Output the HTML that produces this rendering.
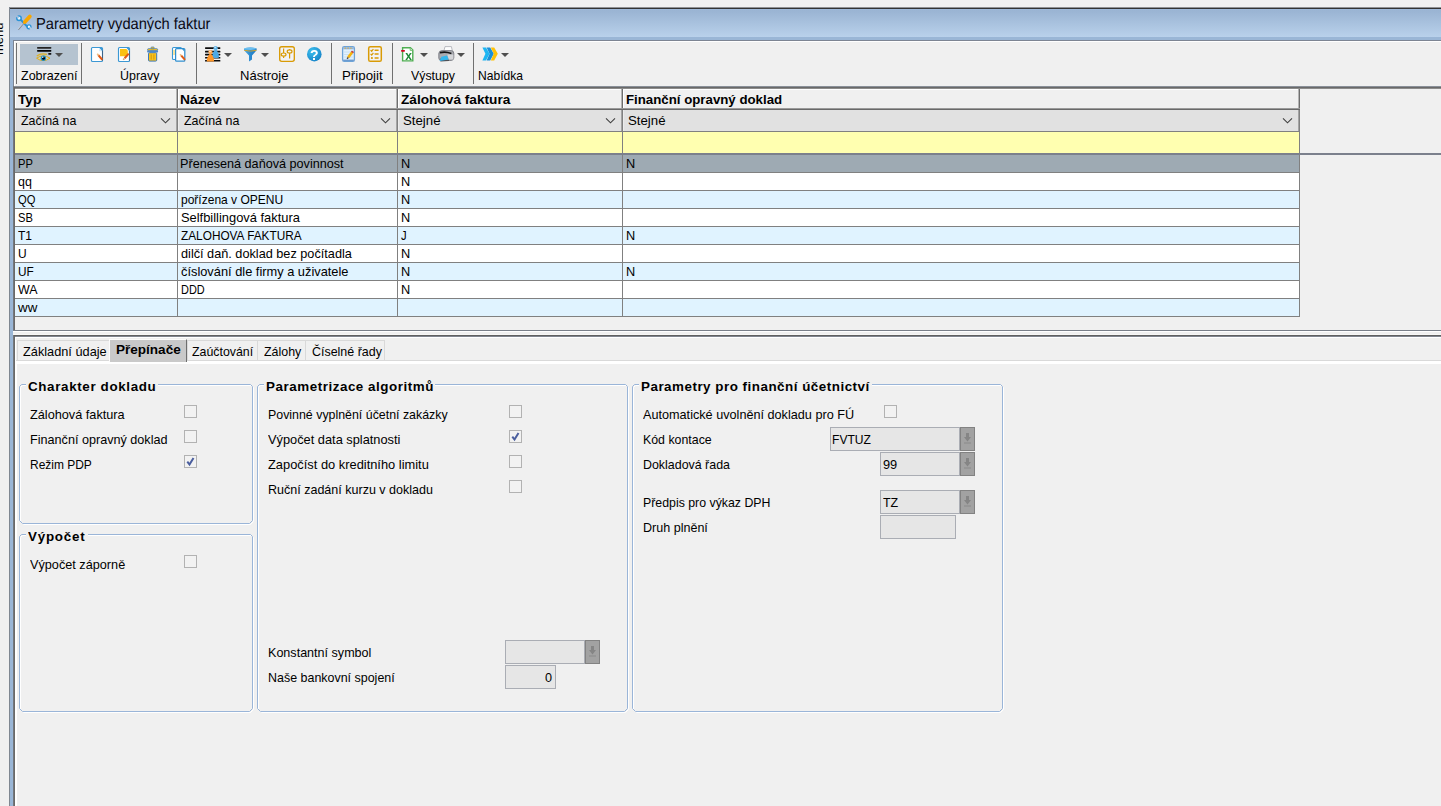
<!DOCTYPE html>
<html lang="cs"><head><meta charset="utf-8"><title>Parametry vydaných faktur</title>
<style>
html,body{margin:0;padding:0}
body{width:1441px;height:806px;overflow:hidden;background:#f0f0f0;position:relative;font-family:"Liberation Sans",sans-serif}
body>div,body>svg,body>span{position:absolute;display:block}
.t{white-space:pre;line-height:20px;transform-origin:0 0}
.menu{left:-8.5px;top:14.5px;width:14px;height:44px;overflow:hidden}
.menu span{position:absolute;left:0;top:40px;white-space:pre;font-size:13px;line-height:13px;transform-origin:0 0;transform:rotate(-90deg)}
</style></head><body>
<div class="menu"><span>menu</span></div>
<!-- window frame + title bar -->
<div style="left:9px;top:7px;width:1432px;height:1px;background:#8f9195;"></div>
<div style="left:9px;top:8px;width:1432px;height:1px;background:#333333;"></div>
<div style="left:9px;top:7px;width:1px;height:799px;background:#7f8791;"></div>
<div style="left:10px;top:9px;width:1431px;height:28px;background:linear-gradient(#9ab4d3 0%, #9bb5d4 10%, #b9d1eb 100%);"></div>
<div style="left:10px;top:9px;width:1431px;height:1px;background:#9db8d8;"></div>
<div style="left:10px;top:37px;width:1431px;height:3px;background:#9ab6d6;"></div>
<div style="left:10px;top:37px;width:3px;height:769px;background:#9ab6d6;"></div>
<div style="left:13px;top:40px;width:1428px;height:1px;background:#7d8593;"></div>
<div style="left:13px;top:40px;width:1px;height:766px;background:#7d8593;"></div>
<div style="left:14px;top:41px;width:1427px;height:1px;background:#ffffff;"></div>
<div style="left:14px;top:41px;width:1px;height:45px;background:#ffffff;"></div>
<!-- toolbar -->
<div style="left:16px;top:43px;width:1px;height:41px;background:#707070;"></div>
<div style="left:81px;top:43px;width:1px;height:41px;background:#707070;"></div>
<div style="left:196px;top:43px;width:1px;height:41px;background:#707070;"></div>
<div style="left:331px;top:43px;width:1px;height:41px;background:#707070;"></div>
<div style="left:392px;top:43px;width:1px;height:41px;background:#707070;"></div>
<div style="left:473px;top:43px;width:1px;height:41px;background:#707070;"></div>
<div style="left:20px;top:44px;width:58px;height:21px;background:#b5c3d0;"></div>
<svg style="left:0;top:0" width="540" height="90" viewBox="0 0 540 90">
<defs>
<radialGradient id="gh" cx="35%" cy="30%" r="80%"><stop offset="0" stop-color="#3cc0ee"/><stop offset="1" stop-color="#1580c6"/></radialGradient>
<linearGradient id="gf" x1="0" x2="1"><stop offset="0" stop-color="#4fb0ea"/><stop offset=".5" stop-color="#2a8ad0"/><stop offset="1" stop-color="#1f78c0"/></linearGradient>
</defs>
<!-- title icon: wrench + screwdriver -->
<g>
<path d="M20.6 19.6 L28 27.4" stroke="#2b93d6" stroke-width="2.1" fill="none"/>
<circle cx="19" cy="18.2" r="2.2" fill="#e6f5fc" stroke="#2b93d6" stroke-width="1.5"/>
<path d="M16.2 15.6 L18.6 17.8" stroke="#a3bddb" stroke-width="1.9"/>
<circle cx="29" cy="26.8" r="1.9" fill="#eef8fd" stroke="#2b93d6" stroke-width="1.4"/>
<path d="M29.4 27.2 L31.6 29.4" stroke="#b1cbe6" stroke-width="1.7"/>
<path d="M23.8 23.2 L18.4 29.6" stroke="#848a94" stroke-width="1.3" fill="none"/>
<path d="M23 23.4 L18 29" stroke="#e6edf5" stroke-width=".7" fill="none" opacity=".8"/>
<path d="M29.8 16.4 L24.8 22" stroke="#f7a600" stroke-width="3.8" stroke-linecap="round" fill="none"/>
</g>
<!-- eye / view icon -->
<g>
<rect x="37" y="47.1" width="14.4" height="1.6" rx=".7" fill="#242424"/>
<rect x="37" y="50.1" width="14.4" height="1.6" rx=".7" fill="#050505"/>
<rect x="48.2" y="53.1" width="3.2" height="1.6" rx=".6" fill="#151515"/>
<path d="M36.8 56 Q41 52.6 47 54.4" fill="none" stroke="#e3b31e" stroke-width="1.2"/>
<path d="M36.6 58.2 Q43.2 53.6 50 58.2 Q43.2 63 36.6 58.2 Z" fill="#e9d9a0" fill-opacity=".55" stroke="#dfae1a" stroke-width="1"/>
<circle cx="43.4" cy="58.3" r="2.7" fill="#1f8fc6"/>
<circle cx="43.5" cy="58.2" r="1.5" fill="#06080c"/>
<circle cx="42.8" cy="57.2" r=".7" fill="#ffffff"/>
</g>
<!-- dropdown arrows -->
<g fill="#4f4f4f">
<path d="M55 53 h8 l-4 4 z"/><path d="M224 53 h8 l-4 4 z"/><path d="M261 53 h8 l-4 4 z"/>
<path d="M420 53 h8 l-4 4 z"/><path d="M457 53 h8 l-4 4 z"/><path d="M501 53 h8 l-4 4 z"/>
</g>
<!-- new document -->
<g>
<rect x="91.5" y="47.5" width="11" height="14" rx="1" fill="#ffffff" stroke="#3c98d4" stroke-width="1.15"/>
<path d="M99.4 48 h2.6 v3 z" fill="#3c98d4"/>
<path d="M99.2 48.6 v2.6 h2.6" fill="#cfe9f9"/>
<path d="M102.5 50.6 V60.6" stroke="#3d5878" stroke-width="1" opacity=".8"/>
<path d="M98.3 55.1 L102.3 59.8" stroke="#e25a14" stroke-width="2.1" fill="none"/>
<path d="M97.2 53.8 L98.6 55.4" stroke="#eebf86" stroke-width="1.6" fill="none"/>
</g>
<!-- edit document -->
<g>
<rect x="118.5" y="47.5" width="11" height="14" rx="1" fill="#ffffff" stroke="#3c98d4" stroke-width="1.15"/>
<path d="M120 49 h6.4 l1.4 1.6 v5.6 h-7.8 z" fill="#fac113"/>
<path d="M126.6 48 h2.4 v2.8 z" fill="#3c98d4"/>
<path d="M129.5 51 V60.6" stroke="#3d5878" stroke-width="1" opacity=".7"/>
<path d="M128.7 53.6 L124.6 58.2" stroke="#e25a14" stroke-width="2.1" fill="none"/>
<path d="M124.4 58.4 L123.2 59.8" stroke="#c9a070" stroke-width="1.5" fill="none"/>
</g>
<!-- trash -->
<g>
<rect x="148.5" y="52.7" width="8.2" height="8.4" rx="1" fill="#fac21c" stroke="#3f79b6" stroke-width="1"/>
<path d="M151.2 54.4 V59.6 M153.9 54.4 V59.6" stroke="#d39a0c" stroke-width="1"/>
<rect x="147.6" y="48.7" width="10" height="2" rx=".8" fill="#fac21c" stroke="#3f79b6" stroke-width=".8"/>
<rect x="147.1" y="50.5" width="11" height="2" rx=".8" fill="#4d88ca"/>
<rect x="151" y="47" width="3.2" height="1.7" rx=".7" fill="#fac21c" stroke="#3f79b6" stroke-width=".7"/>
</g>
<!-- copy document -->
<g>
<rect x="172.5" y="47.5" width="9" height="12" rx="1" fill="#ffffff" stroke="#3c98d4" stroke-width="1.1"/>
<rect x="173.4" y="50" width="1.2" height="5" fill="#fbd765"/>
<rect x="175.6" y="48.6" width="9.2" height="12.6" rx="1" fill="#ffffff" stroke="#2f8fd0" stroke-width="1.25"/>
<path d="M182 49 h2.4 v2.8 z" fill="#3c98d4"/>
<path d="M181.1 55.4 L185 59.9" stroke="#e25a14" stroke-width="2" fill="none"/>
<path d="M180 54.2 L181.3 55.7" stroke="#eebf86" stroke-width="1.5" fill="none"/>
</g>
<!-- list with pawns -->
<g>
<g fill="#0c0c0c"><rect x="205" y="47.2" width="15.4" height="1.7" rx=".6"/><rect x="205" y="50.8" width="15.4" height="1.7" rx=".6"/><rect x="205" y="53.8" width="15.4" height="1.6" rx=".6"/><rect x="205" y="56.9" width="15.4" height="1.6" rx=".6"/><rect x="205" y="59.9" width="15.4" height="1.7" rx=".6"/></g>
<path d="M215.6 49 C217.8 51.4 219.3 54.6 219 57.6 Q215.6 58.6 212.4 57.6 C212 54.6 213.4 51.4 215.6 49 Z" fill="#4da9e4"/>
<circle cx="215.6" cy="48.2" r="2.1" fill="#62b6ea"/>
<circle cx="215.2" cy="47.6" r=".8" fill="#c8e8fa"/>
<path d="M210.4 53 C212.8 55.4 214.4 58.4 214 61.4 H206.8 C206.4 58.4 208 55.4 210.4 53 Z" fill="#ff9628"/>
<circle cx="210.4" cy="52" r="2.1" fill="#ffa54a"/>
<circle cx="210" cy="51.4" r=".8" fill="#ffe7cf"/>
</g>
<!-- funnel -->
<g>
<path d="M244 48.6 Q250.3 46.2 256.6 48.6 V50.2 L252 55.6 V59.6 L249 61.6 V55.6 L244 50.2 Z" fill="url(#gf)"/>
<ellipse cx="250.3" cy="48.7" rx="5.8" ry="1.2" fill="#6cc0f0"/>
<path d="M244.3 50.4 Q250.3 51.8 256.3 50.4" fill="none" stroke="#d6a227" stroke-width="1"/>
</g>
<!-- sliders box -->
<g fill="none" stroke="#d99b05">
<rect x="279.7" y="46.7" width="14.6" height="14.6" rx="2" fill="#f2f3f8" stroke-width="1.35"/>
<path d="M283.6 48.6 V53 M283.6 56 V58" stroke-width="1.2"/>
<ellipse cx="283.6" cy="54.6" rx="2.4" ry="1.6" fill="#f2f3f8" stroke-width="1.2"/>
<path d="M289.6 49 V50 M289.6 53 V58.6" stroke-width="1.2"/>
<ellipse cx="289.6" cy="51.4" rx="2.4" ry="1.6" fill="#f2f3f8" stroke-width="1.2"/>
</g>
<!-- help -->
<g>
<circle cx="314.3" cy="54.2" r="7.3" fill="url(#gh)"/>
</g>
<!-- notepad -->
<g>
<rect x="342.6" y="46.7" width="11.8" height="14.6" rx="1.6" fill="#e2f1fc" stroke="#6ea3d6" stroke-width="1.3"/>
<rect x="343.2" y="47.3" width="10.6" height="2" fill="#8fb3dc"/>
<path d="M344.6 48.2 h1.4 M347.4 48.2 h1.4 M350.2 48.2 h1.4" stroke="#d8b050" stroke-width="1.2"/>
<path d="M344 52 h9 M344 54.5 h9 M344 57 h9" stroke="#c3dcf1" stroke-width=".8"/>
<rect x="343.2" y="59.6" width="10.6" height="1.4" fill="#6c9bd0"/>
<path d="M352.2 52.2 L348.2 57.4" stroke="#f6b40c" stroke-width="2.6" fill="none"/>
<path d="M353 51.2 L352 52.6" stroke="#c8403a" stroke-width="2.6" fill="none"/>
<path d="M348.2 57.4 L347.2 58.9" stroke="#5a4632" stroke-width="1.5" fill="none"/>
</g>
<!-- checklist -->
<g fill="none" stroke="#d99b05">
<rect x="368.7" y="46.7" width="12.6" height="14.6" rx="1.6" fill="#f2f3f8" stroke-width="1.5"/>
<path d="M370.6 50 L371.7 51.2 L373.4 49" stroke-width="1.2"/>
<path d="M370.6 53.8 L371.7 55 L373.4 52.8" stroke-width="1.2"/>
<circle cx="371.9" cy="58" r="1.1" fill="#d99b05" stroke="none"/>
<path d="M374.6 50.2 h4 M374.6 54 h4 M374.6 58 h4" stroke-width="1.5"/>
</g>
<!-- excel -->
<g>
<path d="M402.6 47.7 H410.4 L412.8 50.1 V60.9 H402.6 Z" fill="#ffffff" stroke="#4fae52" stroke-width="1.4"/>
<path d="M410.2 47.8 V50.4 H412.8" fill="#d6efd6" stroke="#55b055" stroke-width=".8"/>
<rect x="401" y="50" width="4" height="1.8" rx=".8" fill="#d0061e"/>
</g>
<!-- printer -->
<g>
<path d="M445 46.6 H451.4 L452.6 52 H443.6 Z" fill="#fdfdfd" stroke="#a9abb2" stroke-width=".8"/>
<path d="M438.8 53.4 Q439 50.8 442 50.6 H451.4 Q453.8 50.8 453.8 53.4 V58 Q453.6 60.2 451.4 60.4 H441 Q438.8 60.2 438.8 58 Z" fill="#a9abb0" stroke="#6d6f76" stroke-width=".8"/>
<path d="M447.4 54.4 H453.4 V59.4 H448.6 Z" fill="#d4d5d8"/>
<path d="M440 51.8 Q445.8 50.4 451.6 52.8 L451.2 54.2 Q445.8 52.4 439.8 53.6 Z" fill="#141416"/>
<path d="M440.2 58.6 L449 59.8 L449 61 L440.4 61.6 Z" fill="#4f5157"/>
<path d="M441.4 56.8 L447 55.4 L448.8 59.6 L439.6 61 Z" fill="#32b6ee"/>
</g>
<!-- chevrons -->
<g>
<path d="M482.4 47.4 H486 L489.6 53.8 L486 60.6 H482.4 L485.4 53.8 Z" fill="#1fb6f2"/>
<path d="M486.6 47.4 H490.2 L493.8 53.8 L490.2 60.6 H486.6 L489.6 53.8 Z" fill="#1a90d8"/>
<path d="M490.8 47.4 H494.2 L497.8 53.8 L494.2 60.6 H490.8 L493.8 53.8 Z" fill="#ffc107"/>
</g>
</svg>

<!-- data grid -->
<div style="left:13px;top:86px;width:1428px;height:1px;background:#8a9099;"></div>
<div style="left:13px;top:87px;width:1428px;height:1px;background:#696969;"></div>
<div style="left:14px;top:88px;width:1427px;height:1px;background:#8c8c8c;"></div>
<div style="left:13px;top:86px;width:1px;height:245px;background:#74777c;"></div>
<div style="left:14px;top:88px;width:1px;height:242px;background:#696969;"></div>
<div style="left:15px;top:89px;width:1285px;height:19px;background:#f0f0f0;"></div>
<div style="left:15px;top:89px;width:1284px;height:1px;background:#ffffff;"></div>
<div style="left:15px;top:89px;width:1px;height:19px;background:#ffffff;"></div>
<div style="left:176px;top:89px;width:1px;height:19px;background:#b4b4b4;"></div>
<div style="left:177px;top:89px;width:1px;height:66px;background:#6e6e6e;"></div>
<div style="left:178px;top:89px;width:1px;height:19px;background:#ffffff;"></div>
<div style="left:396px;top:89px;width:1px;height:19px;background:#b4b4b4;"></div>
<div style="left:397px;top:89px;width:1px;height:66px;background:#6e6e6e;"></div>
<div style="left:398px;top:89px;width:1px;height:19px;background:#ffffff;"></div>
<div style="left:621px;top:89px;width:1px;height:19px;background:#b4b4b4;"></div>
<div style="left:622px;top:89px;width:1px;height:66px;background:#6e6e6e;"></div>
<div style="left:623px;top:89px;width:1px;height:19px;background:#ffffff;"></div>
<div style="left:1298px;top:89px;width:1px;height:19px;background:#b4b4b4;"></div>
<div style="left:1299px;top:89px;width:1px;height:66px;background:#6e6e6e;"></div>
<div style="left:15px;top:108px;width:1285px;height:1px;background:#9a9a9a;"></div>
<div style="left:15px;top:109px;width:1285px;height:1px;background:#696969;"></div>
<div style="left:15px;top:110px;width:1284px;height:21px;background:#e1e1e1;"></div>
<div style="left:177px;top:110px;width:1px;height:21px;background:#808080;"></div>
<div style="left:176px;top:110px;width:1px;height:21px;background:#a4a4a4;"></div>
<div style="left:15px;top:110px;width:1px;height:21px;background:#ececec;"></div>
<div style="left:397px;top:110px;width:1px;height:21px;background:#808080;"></div>
<div style="left:396px;top:110px;width:1px;height:21px;background:#a4a4a4;"></div>
<div style="left:178px;top:110px;width:1px;height:21px;background:#ececec;"></div>
<div style="left:622px;top:110px;width:1px;height:21px;background:#808080;"></div>
<div style="left:621px;top:110px;width:1px;height:21px;background:#a4a4a4;"></div>
<div style="left:398px;top:110px;width:1px;height:21px;background:#ececec;"></div>
<div style="left:1299px;top:110px;width:1px;height:21px;background:#808080;"></div>
<div style="left:1298px;top:110px;width:1px;height:21px;background:#a4a4a4;"></div>
<div style="left:623px;top:110px;width:1px;height:21px;background:#ececec;"></div>
<div style="left:15px;top:131px;width:1285px;height:1px;background:#808080;"></div>
<div style="left:15px;top:132px;width:1284px;height:21px;background:#ffffb0;"></div>
<div style="left:177px;top:132px;width:1px;height:21px;background:#808080;"></div>
<div style="left:397px;top:132px;width:1px;height:21px;background:#808080;"></div>
<div style="left:622px;top:132px;width:1px;height:21px;background:#808080;"></div>
<div style="left:1299px;top:132px;width:1px;height:21px;background:#808080;"></div>
<div style="left:15px;top:153px;width:1426px;height:2px;background:#7b808c;"></div>
<div style="left:15px;top:155px;width:1284px;height:17px;background:#9eaab3;"></div>
<div style="left:15px;top:172px;width:1285px;height:1px;background:#808080;"></div>
<div style="left:15px;top:173px;width:1284px;height:17px;background:#ffffff;"></div>
<div style="left:15px;top:190px;width:1285px;height:1px;background:#808080;"></div>
<div style="left:15px;top:191px;width:1284px;height:17px;background:#e0f3ff;"></div>
<div style="left:15px;top:208px;width:1285px;height:1px;background:#808080;"></div>
<div style="left:15px;top:209px;width:1284px;height:17px;background:#ffffff;"></div>
<div style="left:15px;top:226px;width:1285px;height:1px;background:#808080;"></div>
<div style="left:15px;top:227px;width:1284px;height:17px;background:#e0f3ff;"></div>
<div style="left:15px;top:244px;width:1285px;height:1px;background:#808080;"></div>
<div style="left:15px;top:245px;width:1284px;height:17px;background:#ffffff;"></div>
<div style="left:15px;top:262px;width:1285px;height:1px;background:#808080;"></div>
<div style="left:15px;top:263px;width:1284px;height:17px;background:#e0f3ff;"></div>
<div style="left:15px;top:280px;width:1285px;height:1px;background:#808080;"></div>
<div style="left:15px;top:281px;width:1284px;height:17px;background:#ffffff;"></div>
<div style="left:15px;top:298px;width:1285px;height:1px;background:#808080;"></div>
<div style="left:15px;top:299px;width:1284px;height:17px;background:#e0f3ff;"></div>
<div style="left:15px;top:316px;width:1285px;height:1px;background:#808080;"></div>
<div style="left:177px;top:155px;width:1px;height:162px;background:#808080;"></div>
<div style="left:397px;top:155px;width:1px;height:162px;background:#808080;"></div>
<div style="left:622px;top:155px;width:1px;height:162px;background:#808080;"></div>
<div style="left:1299px;top:155px;width:1px;height:162px;background:#808080;"></div>
<div style="left:13px;top:330px;width:1428px;height:1px;background:#7a808a;"></div>
<div style="left:13px;top:331px;width:1428px;height:1px;background:#ffffff;"></div>
<div style="left:13px;top:332px;width:1428px;height:2px;background:#f0f0f0;"></div>
<div style="left:13px;top:334px;width:1428px;height:1px;background:#f7f7f7;"></div>
<div style="left:13px;top:335px;width:1428px;height:1px;background:#606060;"></div>
<div style="left:13px;top:336px;width:1428px;height:1px;background:#80858f;"></div>
<div style="left:13px;top:335px;width:1px;height:471px;background:#74777c;"></div>
<div style="left:14px;top:336px;width:1px;height:470px;background:#696969;"></div>
<div style="left:15px;top:337px;width:1426px;height:1px;background:#ffffff;"></div>
<div style="left:15px;top:337px;width:1px;height:469px;background:#ffffff;"></div>
<div style="left:16px;top:361px;width:1px;height:445px;background:#ffffff;"></div>
<svg style="left:160px;top:117px" width="12" height="8" viewBox="0 0 12 8"><path d="M1 1.3 L5.5 5.8 L10 1.3" fill="none" stroke="#404040" stroke-width="1.1"/></svg>
<svg style="left:380px;top:117px" width="12" height="8" viewBox="0 0 12 8"><path d="M1 1.3 L5.5 5.8 L10 1.3" fill="none" stroke="#404040" stroke-width="1.1"/></svg>
<svg style="left:605px;top:117px" width="12" height="8" viewBox="0 0 12 8"><path d="M1 1.3 L5.5 5.8 L10 1.3" fill="none" stroke="#404040" stroke-width="1.1"/></svg>
<svg style="left:1282px;top:117px" width="12" height="8" viewBox="0 0 12 8"><path d="M1 1.3 L5.5 5.8 L10 1.3" fill="none" stroke="#404040" stroke-width="1.1"/></svg>
<!-- tab strip -->
<div style="left:16px;top:360px;width:1425px;height:1px;background:#d9d9d9;"></div>
<div style="left:16px;top:361px;width:1425px;height:3px;background:#ffffff;"></div>
<div style="left:17px;top:340px;width:93px;height:21px;box-sizing:border-box;border:1px solid #d9d9d9;background:#f0f0f0"></div>
<div style="left:187px;top:340px;width:71px;height:21px;box-sizing:border-box;border:1px solid #d9d9d9;background:#f0f0f0"></div>
<div style="left:257px;top:340px;width:49px;height:21px;box-sizing:border-box;border:1px solid #d9d9d9;background:#f0f0f0"></div>
<div style="left:305px;top:340px;width:80px;height:21px;box-sizing:border-box;border:1px solid #d9d9d9;background:#f0f0f0"></div>
<div style="left:109px;top:339px;width:78px;height:23px;box-sizing:border-box;background:#c9c9c9;border-top:1px solid #fbfbfb;border-left:1px solid #fbfbfb;border-right:1px solid #6e6e6e"></div>
<!-- group boxes / form -->
<svg style="left:19px;top:384px" width="236" height="142" viewBox="0 0 236 142"><path d="M3.5 1.5 H232.5 L234.5 3.5 V137.5 L231.5 140.5 H4.5 L1.5 137.5 V3.5 Z" fill="none" stroke="#ffffff" stroke-width="1"/><path d="M2.5 0.5 H231.5 L233.5 2.5 V136.5 L230.5 139.5 H3.5 L0.5 136.5 V2.5 Z" fill="none" stroke="#9ab5d8" stroke-width="1"/></svg>
<div style="left:26px;top:384px;width:132px;height:2px;background:#f0f0f0;"></div>
<svg style="left:19px;top:534px" width="236" height="180" viewBox="0 0 236 180"><path d="M3.5 1.5 H232.5 L234.5 3.5 V175.5 L231.5 178.5 H4.5 L1.5 175.5 V3.5 Z" fill="none" stroke="#ffffff" stroke-width="1"/><path d="M2.5 0.5 H231.5 L233.5 2.5 V174.5 L230.5 177.5 H3.5 L0.5 174.5 V2.5 Z" fill="none" stroke="#9ab5d8" stroke-width="1"/></svg>
<div style="left:26px;top:534px;width:62px;height:2px;background:#f0f0f0;"></div>
<svg style="left:257px;top:384px" width="373" height="330" viewBox="0 0 373 330"><path d="M3.5 1.5 H369.5 L371.5 3.5 V325.5 L368.5 328.5 H4.5 L1.5 325.5 V3.5 Z" fill="none" stroke="#ffffff" stroke-width="1"/><path d="M2.5 0.5 H368.5 L370.5 2.5 V324.5 L367.5 327.5 H3.5 L0.5 324.5 V2.5 Z" fill="none" stroke="#9ab5d8" stroke-width="1"/></svg>
<div style="left:264px;top:384px;width:171px;height:2px;background:#f0f0f0;"></div>
<svg style="left:632px;top:384px" width="373" height="330" viewBox="0 0 373 330"><path d="M3.5 1.5 H369.5 L371.5 3.5 V325.5 L368.5 328.5 H4.5 L1.5 325.5 V3.5 Z" fill="none" stroke="#ffffff" stroke-width="1"/><path d="M2.5 0.5 H368.5 L370.5 2.5 V324.5 L367.5 327.5 H3.5 L0.5 324.5 V2.5 Z" fill="none" stroke="#9ab5d8" stroke-width="1"/></svg>
<div style="left:639px;top:384px;width:233px;height:2px;background:#f0f0f0;"></div>
<div style="left:184px;top:405px;width:13px;height:13px;box-sizing:border-box;border:1px solid #b2b2b2;background:#f2f2f2"></div>
<div style="left:184px;top:430px;width:13px;height:13px;box-sizing:border-box;border:1px solid #b2b2b2;background:#f2f2f2"></div>
<div style="left:184px;top:455px;width:13px;height:13px;box-sizing:border-box;border:1px solid #b2b2b2;background:#f2f2f2"></div>
<svg style="left:184px;top:455px" width="13" height="13" viewBox="0 0 13 13"><path d="M3.3 6.7 L5.5 9.5 L9.5 3" fill="none" stroke="#4a5e9e" stroke-width="2"/></svg>
<div style="left:184px;top:555px;width:13px;height:13px;box-sizing:border-box;border:1px solid #b2b2b2;background:#f2f2f2"></div>
<div style="left:509px;top:405px;width:13px;height:13px;box-sizing:border-box;border:1px solid #b2b2b2;background:#f2f2f2"></div>
<div style="left:509px;top:430px;width:13px;height:13px;box-sizing:border-box;border:1px solid #b2b2b2;background:#f2f2f2"></div>
<svg style="left:509px;top:430px" width="13" height="13" viewBox="0 0 13 13"><path d="M3.3 6.7 L5.5 9.5 L9.5 3" fill="none" stroke="#4a5e9e" stroke-width="2"/></svg>
<div style="left:509px;top:455px;width:13px;height:13px;box-sizing:border-box;border:1px solid #b2b2b2;background:#f2f2f2"></div>
<div style="left:509px;top:480px;width:13px;height:13px;box-sizing:border-box;border:1px solid #b2b2b2;background:#f2f2f2"></div>
<div style="left:884px;top:405px;width:13px;height:13px;box-sizing:border-box;border:1px solid #b2b2b2;background:#f2f2f2"></div>
<div style="left:830px;top:427px;width:130px;height:24px;box-sizing:border-box;border:1px solid #aaadb4;background:#e6e6e6"></div>
<div style="left:960px;top:427px;width:15px;height:24px;box-sizing:border-box;border:1px solid #828282;background:#a2a2a2"></div>
<svg style="left:960px;top:427px" width="15" height="24" viewBox="0 0 15 24"><path d="M6 6 H9 V10 H11 L7.5 14.5 L4 10 H6 Z" fill="#858585"/><rect x="4" y="15.5" width="7" height="1" fill="#8a8a8a"/></svg>
<div style="left:880px;top:452px;width:80px;height:24px;box-sizing:border-box;border:1px solid #aaadb4;background:#e6e6e6"></div>
<div style="left:960px;top:452px;width:15px;height:24px;box-sizing:border-box;border:1px solid #828282;background:#a2a2a2"></div>
<svg style="left:960px;top:452px" width="15" height="24" viewBox="0 0 15 24"><path d="M6 6 H9 V10 H11 L7.5 14.5 L4 10 H6 Z" fill="#858585"/><rect x="4" y="15.5" width="7" height="1" fill="#8a8a8a"/></svg>
<div style="left:880px;top:490px;width:80px;height:24px;box-sizing:border-box;border:1px solid #aaadb4;background:#e6e6e6"></div>
<div style="left:960px;top:490px;width:15px;height:24px;box-sizing:border-box;border:1px solid #828282;background:#a2a2a2"></div>
<svg style="left:960px;top:490px" width="15" height="24" viewBox="0 0 15 24"><path d="M6 6 H9 V10 H11 L7.5 14.5 L4 10 H6 Z" fill="#858585"/><rect x="4" y="15.5" width="7" height="1" fill="#8a8a8a"/></svg>
<div style="left:880px;top:515px;width:76px;height:24px;box-sizing:border-box;border:1px solid #aaadb4;background:#e6e6e6"></div>
<div style="left:505px;top:640px;width:80px;height:24px;box-sizing:border-box;border:1px solid #aaadb4;background:#e6e6e6"></div>
<div style="left:585px;top:640px;width:15px;height:24px;box-sizing:border-box;border:1px solid #828282;background:#a2a2a2"></div>
<svg style="left:585px;top:640px" width="15" height="24" viewBox="0 0 15 24"><path d="M6 6 H9 V10 H11 L7.5 14.5 L4 10 H6 Z" fill="#858585"/><rect x="4" y="15.5" width="7" height="1" fill="#8a8a8a"/></svg>
<div style="left:505px;top:665px;width:51px;height:24px;box-sizing:border-box;border:1px solid #aaadb4;background:#e6e6e6"></div>
<!-- text -->
<span class="t" style="left:20.73px;top:66px;font-size:13px;font-weight:400;color:#000;transform:scaleX(0.9638);">Zobrazení</span>
<span class="t" style="left:119.66px;top:66px;font-size:13px;font-weight:400;color:#000;transform:scaleX(0.956);">Úpravy</span>
<span class="t" style="left:239.5px;top:66px;font-size:13px;font-weight:400;color:#000;transform:scaleX(1.0021);">Nástroje</span>
<span class="t" style="left:341.5px;top:66px;font-size:13px;font-weight:400;color:#000;transform:scaleX(1.0222);">Připojit</span>
<span class="t" style="left:411.05px;top:66px;font-size:13px;font-weight:400;color:#000;transform:scaleX(0.9499);">Výstupy</span>
<span class="t" style="left:477.5px;top:66px;font-size:13px;font-weight:400;color:#000;transform:scaleX(0.9286);">Nabídka</span>
<span class="t" style="left:35.63px;top:15px;font-size:16px;font-weight:400;color:#0a0a14;transform:scaleX(0.9167);text-rendering:geometricPrecision;">Parametry vydaných faktur</span>
<span class="t" style="left:17.99px;top:90px;font-size:13px;font-weight:700;color:#000;transform:scaleX(1.0501);">Typ</span>
<span class="t" style="left:180.19px;top:90px;font-size:13px;font-weight:700;color:#000;transform:scaleX(1.0632);">Název</span>
<span class="t" style="left:400.72px;top:90px;font-size:13px;font-weight:700;color:#000;transform:scaleX(1.0512);">Zálohová faktura</span>
<span class="t" style="left:625.52px;top:90px;font-size:13px;font-weight:700;color:#000;transform:scaleX(1.0195);">Finanční opravný doklad</span>
<span class="t" style="left:20.73px;top:111px;font-size:13px;font-weight:400;color:#000;transform:scaleX(0.9572);">Začíná na</span>
<span class="t" style="left:183.73px;top:111px;font-size:13px;font-weight:400;color:#000;transform:scaleX(0.9572);">Začíná na</span>
<span class="t" style="left:403.39px;top:111px;font-size:13px;font-weight:400;color:#000;transform:scaleX(1.0173);">Stejné</span>
<span class="t" style="left:628.39px;top:111px;font-size:13px;font-weight:400;color:#000;transform:scaleX(1.0173);">Stejné</span>
<span class="t" style="left:17.7px;top:154px;font-size:13px;font-weight:400;color:#000;transform:scaleX(0.8555);">PP</span>
<span class="t" style="left:180.4px;top:154px;font-size:13px;font-weight:400;color:#000;transform:scaleX(0.9714);">Přenesená daňová povinnost</span>
<span class="t" style="left:400.6px;top:154px;font-size:13px;font-weight:400;color:#000;transform:scaleX(0.9801);">N</span>
<span class="t" style="left:625.6px;top:154px;font-size:13px;font-weight:400;color:#000;transform:scaleX(0.9801);">N</span>
<span class="t" style="left:18.35px;top:172px;font-size:13px;font-weight:400;color:#000;transform:scaleX(0.9562);">qq</span>
<span class="t" style="left:400.6px;top:172px;font-size:13px;font-weight:400;color:#000;transform:scaleX(0.9801);">N</span>
<span class="t" style="left:18.35px;top:190px;font-size:13px;font-weight:400;color:#000;transform:scaleX(0.8622);">QQ</span>
<span class="t" style="left:180.7px;top:190px;font-size:13px;font-weight:400;color:#000;transform:scaleX(0.9247);">pořízena v OPENU</span>
<span class="t" style="left:400.6px;top:190px;font-size:13px;font-weight:400;color:#000;transform:scaleX(0.9801);">N</span>
<span class="t" style="left:17.8px;top:208px;font-size:13px;font-weight:400;color:#000;transform:scaleX(0.8563);">SB</span>
<span class="t" style="left:180.59px;top:208px;font-size:13px;font-weight:400;color:#000;transform:scaleX(0.9911);">Selfbillingová faktura</span>
<span class="t" style="left:400.6px;top:208px;font-size:13px;font-weight:400;color:#000;transform:scaleX(0.9801);">N</span>
<span class="t" style="left:17.88px;top:226px;font-size:13px;font-weight:400;color:#000;transform:scaleX(0.9253);">T1</span>
<span class="t" style="left:181.16px;top:226px;font-size:13px;font-weight:400;color:#000;transform:scaleX(0.9095);">ZALOHOVA FAKTURA</span>
<span class="t" style="left:401.02px;top:226px;font-size:13px;font-weight:400;color:#000;transform:scaleX(0.8635);">J</span>
<span class="t" style="left:625.6px;top:226px;font-size:13px;font-weight:400;color:#000;transform:scaleX(0.9801);">N</span>
<span class="t" style="left:17.69px;top:244px;font-size:13px;font-weight:400;color:#000;transform:scaleX(0.919);">U</span>
<span class="t" style="left:180.92px;top:244px;font-size:13px;font-weight:400;color:#000;transform:scaleX(0.9767);">dilčí daň. doklad bez počítadla</span>
<span class="t" style="left:400.6px;top:244px;font-size:13px;font-weight:400;color:#000;transform:scaleX(0.9801);">N</span>
<span class="t" style="left:17.7px;top:262px;font-size:13px;font-weight:400;color:#000;transform:scaleX(0.9083);">UF</span>
<span class="t" style="left:180.91px;top:262px;font-size:13px;font-weight:400;color:#000;transform:scaleX(0.9861);">číslování dle firmy a uživatele</span>
<span class="t" style="left:400.6px;top:262px;font-size:13px;font-weight:400;color:#000;transform:scaleX(0.9801);">N</span>
<span class="t" style="left:625.6px;top:262px;font-size:13px;font-weight:400;color:#000;transform:scaleX(0.9801);">N</span>
<span class="t" style="left:18.21px;top:280px;font-size:13px;font-weight:400;color:#000;transform:scaleX(0.954);">WA</span>
<span class="t" style="left:181.22px;top:280px;font-size:13px;font-weight:400;color:#000;transform:scaleX(0.841);">DDD</span>
<span class="t" style="left:400.6px;top:280px;font-size:13px;font-weight:400;color:#000;transform:scaleX(0.9801);">N</span>
<span class="t" style="left:18.27px;top:298px;font-size:13px;font-weight:400;color:#000;transform:scaleX(1.0258);">ww</span>
<span class="t" style="left:22.73px;top:342px;font-size:13px;font-weight:400;color:#000;transform:scaleX(0.9808);">Základní údaje</span>
<span class="t" style="left:115.7px;top:340px;font-size:13px;font-weight:700;color:#000;transform:scaleX(1.0409);">Přepínače</span>
<span class="t" style="left:191.93px;top:342px;font-size:13px;font-weight:400;color:#000;transform:scaleX(0.9511);">Zaúčtování</span>
<span class="t" style="left:263.73px;top:342px;font-size:13px;font-weight:400;color:#000;transform:scaleX(0.956);">Zálohy</span>
<span class="t" style="left:311.94px;top:342px;font-size:13px;font-weight:400;color:#000;transform:scaleX(0.9573);">Číselné řady</span>
<span class="t" style="left:27.53px;top:377px;font-size:13px;font-weight:700;color:#000;transform:scaleX(1.03);letter-spacing:0.616px;">Charakter dokladu</span>
<span class="t" style="left:28.35px;top:527px;font-size:13px;font-weight:700;color:#000;transform:scaleX(1.03);letter-spacing:0.739px;">Výpočet</span>
<span class="t" style="left:265.62px;top:377px;font-size:13px;font-weight:700;color:#000;transform:scaleX(1.03);letter-spacing:0.526px;">Parametrizace algoritmů</span>
<span class="t" style="left:640.52px;top:377px;font-size:13px;font-weight:700;color:#000;transform:scaleX(1.03);letter-spacing:0.49px;">Parametry pro finanční účetnictví</span>
<span class="t" style="left:29.93px;top:405px;font-size:13px;font-weight:400;color:#000;transform:scaleX(0.9776);">Zálohová faktura</span>
<span class="t" style="left:29.5px;top:430px;font-size:13px;font-weight:400;color:#000;transform:scaleX(0.9707);">Finanční opravný doklad</span>
<span class="t" style="left:29.5px;top:455px;font-size:13px;font-weight:400;color:#000;transform:scaleX(0.9205);">Režim PDP</span>
<span class="t" style="left:30.35px;top:555px;font-size:13px;font-weight:400;color:#000;transform:scaleX(0.9758);">Výpočet záporně</span>
<span class="t" style="left:268.3px;top:405px;font-size:13px;font-weight:400;color:#000;transform:scaleX(0.9525);">Povinné vyplnění účetní zakázky</span>
<span class="t" style="left:268.05px;top:430px;font-size:13px;font-weight:400;color:#000;transform:scaleX(0.9851);">Výpočet data splatnosti</span>
<span class="t" style="left:267.92px;top:455px;font-size:13px;font-weight:400;color:#000;transform:scaleX(0.9892);">Započíst do kreditního limitu</span>
<span class="t" style="left:268.3px;top:480px;font-size:13px;font-weight:400;color:#000;transform:scaleX(0.9631);">Ruční zadání kurzu v dokladu</span>
<span class="t" style="left:268.3px;top:643px;font-size:13px;font-weight:400;color:#000;transform:scaleX(0.9665);">Konstantní symbol</span>
<span class="t" style="left:268.3px;top:668px;font-size:13px;font-weight:400;color:#000;transform:scaleX(0.958);">Naše bankovní spojení</span>
<span class="t" style="left:643.18px;top:405px;font-size:13px;font-weight:400;color:#000;transform:scaleX(0.9737);">Automatické uvolnění dokladu pro FÚ</span>
<span class="t" style="left:643.4px;top:430px;font-size:13px;font-weight:400;color:#000;transform:scaleX(0.9506);">Kód kontace</span>
<span class="t" style="left:643.4px;top:455px;font-size:13px;font-weight:400;color:#000;transform:scaleX(0.9548);">Dokladová řada</span>
<span class="t" style="left:643.4px;top:493px;font-size:13px;font-weight:400;color:#000;transform:scaleX(0.9483);">Předpis pro výkaz DPH</span>
<span class="t" style="left:643.4px;top:518px;font-size:13px;font-weight:400;color:#000;transform:scaleX(0.965);">Druh plnění</span>
<span class="t" style="left:832.2px;top:430px;font-size:13px;font-weight:400;color:#000;transform:scaleX(0.929);">FVTUZ</span>
<span class="t" style="left:882.61px;top:455px;font-size:13px;font-weight:400;color:#000;transform:scaleX(0.9852);">99</span>
<span class="t" style="left:883.05px;top:493px;font-size:13px;font-weight:400;color:#000;transform:scaleX(0.9596);">TZ</span>
<span class="t" style="left:544.95px;top:668px;font-size:13px;font-weight:400;color:#000;transform:scaleX(0.974);">0</span>
<svg style="left:306px;top:46px;will-change:transform" width="17" height="17" viewBox="0 0 17 17"><text x="8.4" y="13.6" text-anchor="middle" font-family="'Liberation Sans',sans-serif" font-weight="700" font-size="14" fill="#ffffff">?</text></svg>
<svg style="left:402px;top:48px;will-change:transform" width="12" height="14" viewBox="0 0 12 14"><text x="6.6" y="12.4" text-anchor="middle" font-family="'Liberation Sans',sans-serif" font-weight="700" font-size="12" fill="#1f8a38">x</text></svg>

</body></html>
